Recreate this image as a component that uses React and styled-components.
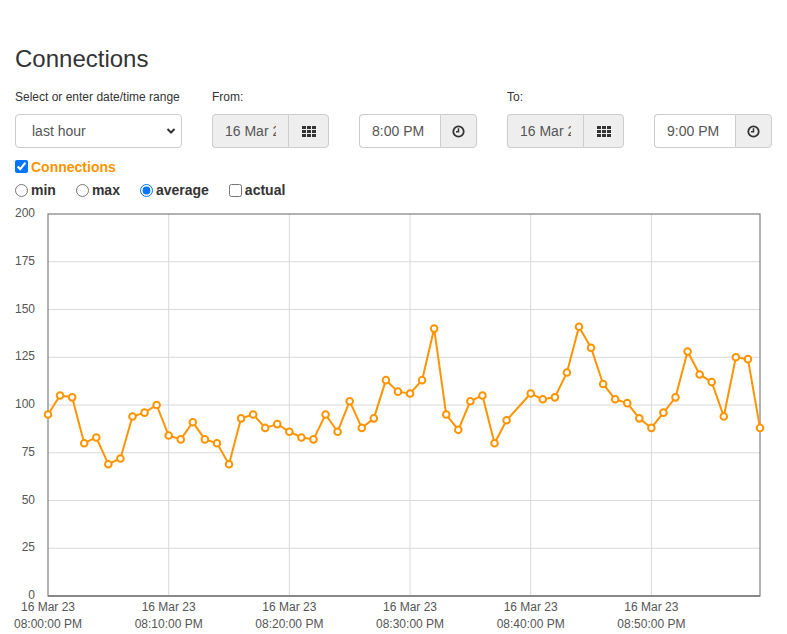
// Connections dashboard: date/time range controls plus the connections line chart

import React from 'react'
import styled, { createGlobalStyle } from 'styled-components'

//Global page reset
const GlobalStyle = createGlobalStyle`
  html, body {
    margin: 0;
    padding: 0;
    overflow: hidden;
    background: #fff;
  }
  body {
    font-family: "Liberation Sans", Arial, Helvetica, sans-serif;
    font-size: 14px;
    color: #333;
  }
`

//Styles
const Page = styled.div`
  width: 787px;
`

const Header = styled.div`
  padding: 0 15px;
`

const Title = styled.h3`
  margin: 46px 0 0;
  font-size: 24px;
  font-weight: 400;
  line-height: 26px;
  color: #333;
`

const ControlRow = styled.div`
  display: flex;
  gap: 30px;
  margin-top: 18px;
`

const Field = styled.div`
  display: flex;
  flex-direction: column;
  width: ${p => p.width}px;
`

const Label = styled.label`
  font-size: 12px;
  line-height: 14px;
  height: 14px;
  margin-bottom: 10px;
  color: #333;
  white-space: nowrap;
`

const SelectWrap = styled.div`
  position: relative;
  height: 34px;
`

const Select = styled.select`
  appearance: none;
  width: 100%;
  height: 34px;
  box-sizing: border-box;
  padding: 0 16px;
  border: 1px solid #ccc;
  border-radius: 4px;
  background: #fff;
  font-family: inherit;
  font-size: 14px;
  color: #555;
`

const Chevron = styled.svg`
  position: absolute;
  right: 6px;
  top: 13px;
  pointer-events: none;
`

const InputGroup = styled.div`
  display: flex;
  height: 34px;
`

const Input = styled.input`
  box-sizing: border-box;
  width: ${p => p.width}px;
  height: 34px;
  padding: 0 12px;
  border: 1px solid #ccc;
  border-right: none;
  border-radius: 4px 0 0 4px;
  background: ${p => (p.$grey ? '#eee' : '#fff')};
  font-family: inherit;
  font-size: 14px;
  color: #555;
  outline: none;
`

const Addon = styled.span`
  box-sizing: border-box;
  width: ${p => p.width}px;
  height: 34px;
  display: flex;
  align-items: center;
  justify-content: center;
  border: 1px solid #ccc;
  border-radius: 0 4px 4px 0;
  background: #eee;
  color: #333;
`

const CheckRow = styled.div`
  display: flex;
  align-items: center;
  height: 21px;
  margin-top: 8px;
`

const OptionRow = styled.div`
  display: flex;
  align-items: center;
  height: 22px;
  margin-top: 2px;
`

const Option = styled.label`
  display: flex;
  align-items: center;
  margin-right: 20px;
  font-size: 14px;
  font-weight: 700;
  color: ${p => p.color || '#333'};

  input {
    margin: 0 3px 0 0;
    width: 13px;
    height: 13px;
  }
`

const Chart = styled.svg`
  display: block;
  margin-top: 3px;
`

//Chart data: minute offset from 08:00 PM and average connections
const values = [
  95, 105, 104, 80, 83, 69, 72, 94, 96, 100,
  84, 82, 91, 82, 80, 69, 93, 95, 88, 90,
  86, 83, 82, 95, 86, 102, 88, 93, 113, 107,
  106, 113, 140, 95, 87, 102, 105, 80, 92,
]
const valuesLate = [
  106, 103, 104, 117, 141, 130, 111, 103, 101, 93,
  88, 96, 104, 128, 116, 112, 94, 125, 124, 88,
]
const points = [
  ...values.map((v, i) => ({ m: i, v })),
  ...valuesLate.map((v, i) => ({ m: 40 + i, v })),
]

const PLOT = { left: 48, right: 760, top: 10, bottom: 392 }
const xOf = m => PLOT.left + (m * (PLOT.right - PLOT.left)) / 59
const yOf = v => PLOT.bottom - (v * (PLOT.bottom - PLOT.top)) / 200

const ORANGE = '#ff9400'
const AXIS_FONT = 'Liberation Sans, Arial, sans-serif'

const GridIcon = () => (
  <svg width="14" height="11" viewBox="0 0 14 11">
    {[0, 5, 10].map(x =>
      [0, 4, 8].map(y => <rect key={`${x}-${y}`} x={x} y={y} width="4" height="3" fill="#333" />)
    )}
  </svg>
)

const ClockIcon = () => (
  <svg width="13" height="13" viewBox="0 0 13 13">
    <circle cx="6.5" cy="6.5" r="5.2" fill="none" stroke="#333" strokeWidth="1.8" />
    <path d="M6.5 3.2 V6.8 H4" fill="none" stroke="#333" strokeWidth="1.5" />
  </svg>
)

const ConnectionsChart = () => {
  const yTicks = [0, 25, 50, 75, 100, 125, 150, 175, 200]
  const xTicks = [0, 10, 20, 30, 40, 50]
  const line = points.map(p => `${xOf(p.m)},${yOf(p.v)}`).join(' ')

  return (
    <Chart width="787" height="431" viewBox="0 0 787 431">
      {yTicks.map(t => (
        <g key={t}>
          {t > 0 && t < 200 && (
            <line x1={PLOT.left} x2={PLOT.right} y1={yOf(t)} y2={yOf(t)} stroke="#d9d9d9" strokeWidth="1" />
          )}
          <text x="35" y={yOf(t) + 3} textAnchor="end" fontSize="12" fill="#555" fontFamily={AXIS_FONT}>
            {t}
          </text>
        </g>
      ))}
      {xTicks.map(m => {
        const x = xOf(m)
        const mm = String(m).padStart(2, '0')
        return (
          <g key={m}>
            {m > 0 && (
              <line x1={x} x2={x} y1={PLOT.top} y2={PLOT.bottom} stroke="#d9d9d9" strokeWidth="1" />
            )}
            <text x={x} y="407" textAnchor="middle" fontSize="12" fill="#555" fontFamily={AXIS_FONT}>
              16 Mar 23
            </text>
            <text x={x} y="424" textAnchor="middle" fontSize="12" fill="#555" fontFamily={AXIS_FONT}>
              08:{mm}:00 PM
            </text>
          </g>
        )
      })}
      <rect
        x={PLOT.left}
        y={PLOT.top}
        width={PLOT.right - PLOT.left}
        height={PLOT.bottom - PLOT.top}
        fill="none"
        stroke="#666"
        strokeWidth="1"
      />
      <line x1={PLOT.left} x2={PLOT.right} y1={PLOT.bottom} y2={PLOT.bottom} stroke="#888" strokeWidth="2" />
      <polyline points={line} fill="none" stroke={ORANGE} strokeWidth="2" strokeLinejoin="round" />
      {points.map(p => (
        <circle key={p.m} cx={xOf(p.m)} cy={yOf(p.v)} r="3.3" fill="#fff" stroke={ORANGE} strokeWidth="2" />
      ))}
    </Chart>
  )
}

const App = () => {
  return (
    <Page>
      <GlobalStyle />
      <Header>
        <Title>Connections</Title>
        <ControlRow>
          <Field width={167}>
            <Label>Select or enter date/time range</Label>
            <SelectWrap>
              <Select defaultValue="hour">
                <option value="hour">last hour</option>
                <option value="day">last day</option>
                <option value="week">last week</option>
              </Select>
              <Chevron width="10" height="8" viewBox="0 0 10 8">
                <path d="M1.5 2 L5 5.5 L8.5 2" fill="none" stroke="#333" strokeWidth="2" />
              </Chevron>
            </SelectWrap>
          </Field>
          <Field width={117}>
            <Label>From:</Label>
            <InputGroup>
              <Input width={76} readOnly $grey defaultValue="16 Mar 2023" />
              <Addon width={41}><GridIcon /></Addon>
            </InputGroup>
          </Field>
          <Field width={118}>
            <Label>&nbsp;</Label>
            <InputGroup>
              <Input width={81} defaultValue="8:00 PM" />
              <Addon width={37}><ClockIcon /></Addon>
            </InputGroup>
          </Field>
          <Field width={117}>
            <Label>To:</Label>
            <InputGroup>
              <Input width={76} readOnly $grey defaultValue="16 Mar 2023" />
              <Addon width={41}><GridIcon /></Addon>
            </InputGroup>
          </Field>
          <Field width={118}>
            <Label>&nbsp;</Label>
            <InputGroup>
              <Input width={81} defaultValue="9:00 PM" />
              <Addon width={37}><ClockIcon /></Addon>
            </InputGroup>
          </Field>
        </ControlRow>
        <CheckRow>
          <Option color={ORANGE}>
            <input type="checkbox" defaultChecked />
            Connections
          </Option>
        </CheckRow>
        <OptionRow>
          <Option>
            <input type="radio" name="agg" />
            min
          </Option>
          <Option>
            <input type="radio" name="agg" />
            max
          </Option>
          <Option>
            <input type="radio" name="agg" defaultChecked />
            average
          </Option>
          <Option>
            <input type="checkbox" />
            actual
          </Option>
        </OptionRow>
      </Header>
      <ConnectionsChart />
    </Page>
  )
}

export default App
